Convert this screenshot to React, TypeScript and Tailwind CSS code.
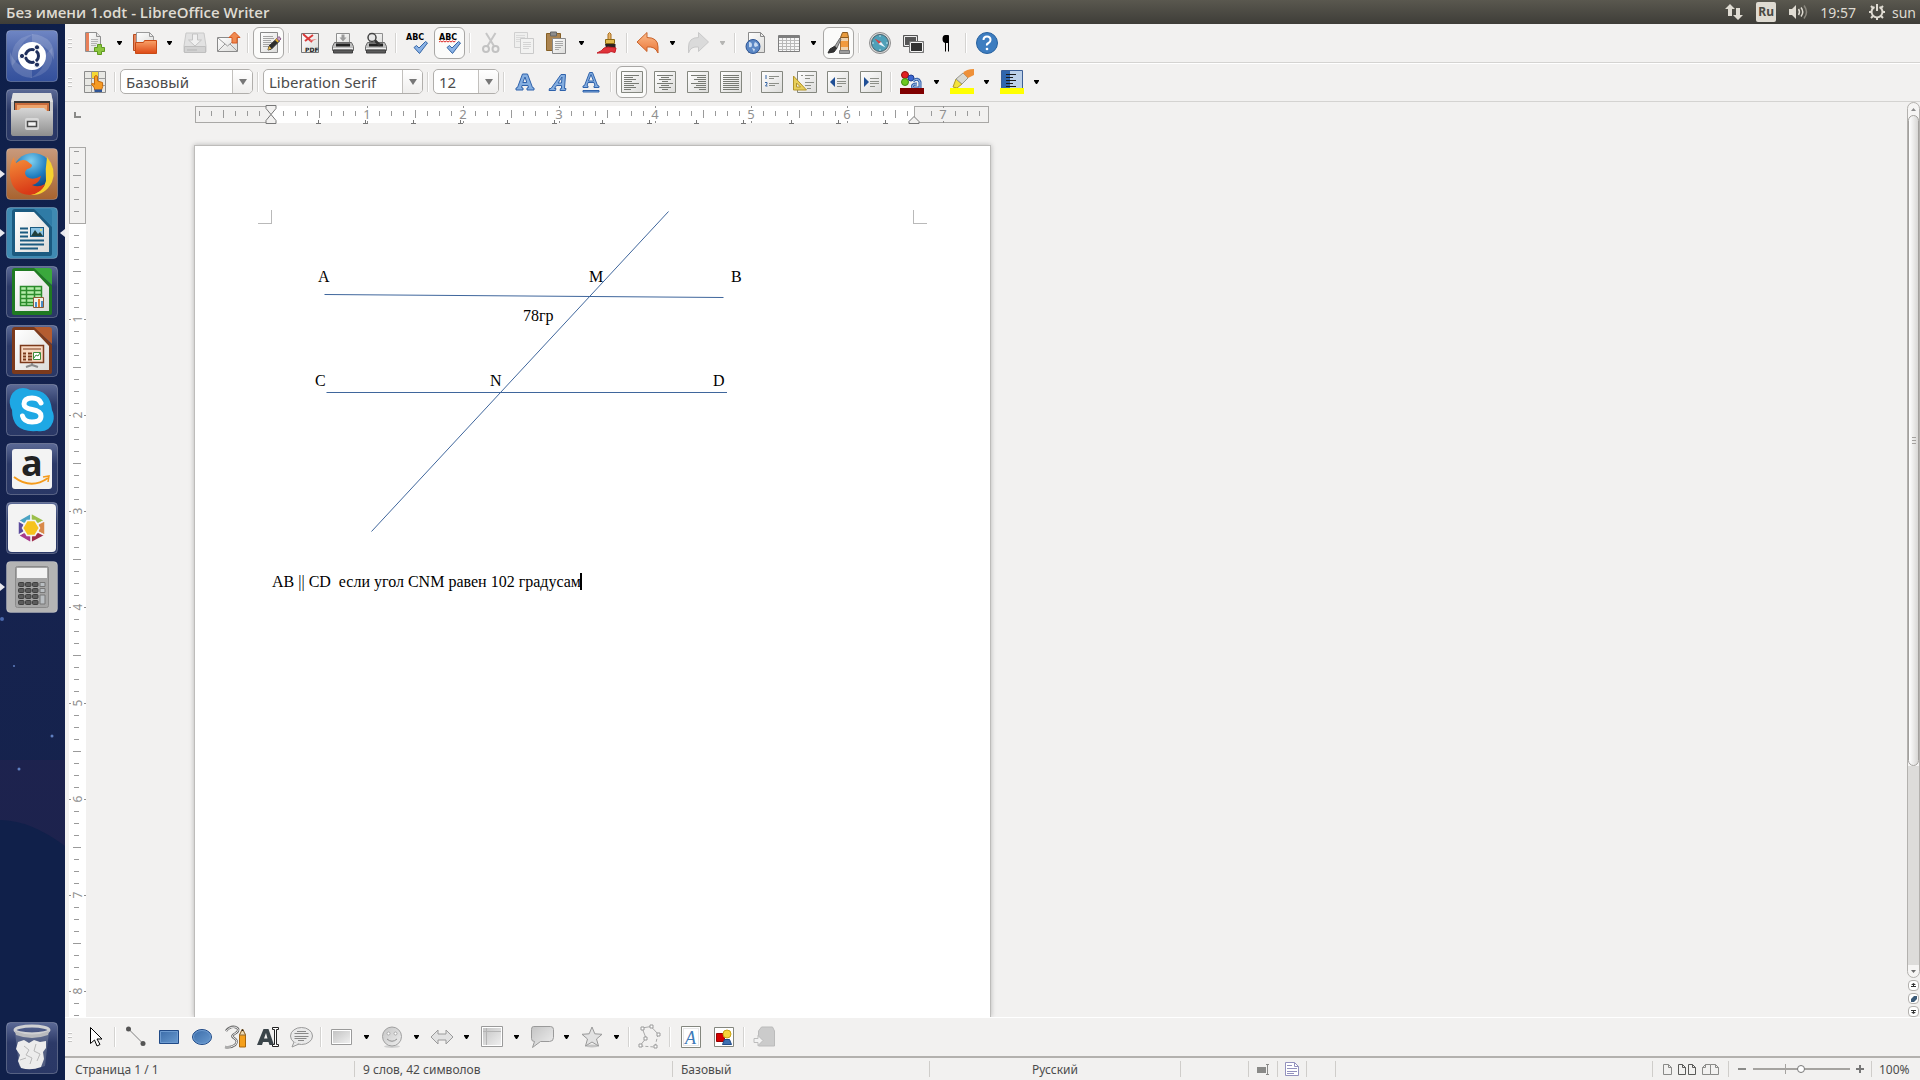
import { ReactNode } from "react";

type Tool = {
  label: string;
  icon: ReactNode;
  menu?: boolean;
  pressed?: boolean;
  disabled?: boolean;
};

type Item = Tool | "sep";

function Ic({ children }: { children: ReactNode }) {
  return (
    <svg className="overflow-visible" width="24" height="24" viewBox="0 0 24 24" fill="none" aria-hidden="true">
      {children}
    </svg>
  );
}

function Defs() {
  return (
    <svg width="0" height="0" className="absolute" aria-hidden="true">
      <defs>
        <linearGradient id="paper" x1="0" y1="0" x2="1" y2="1">
          <stop offset="0" stopColor="#ffffff" />
          <stop offset="1" stopColor="#dcdcda" />
        </linearGradient>
        <linearGradient id="orange" x1="0" y1="0" x2="0" y2="1">
          <stop offset="0" stopColor="#f9a36a" />
          <stop offset="1" stopColor="#dd4814" />
        </linearGradient>
        <linearGradient id="peach" x1="0" y1="0" x2="0" y2="1">
          <stop offset="0" stopColor="#fbbd8c" />
          <stop offset="1" stopColor="#ea7436" />
        </linearGradient>
        <linearGradient id="blue" x1="0" y1="0" x2="1" y2="1">
          <stop offset="0" stopColor="#3a6ba8" />
          <stop offset="1" stopColor="#6a9bd0" />
        </linearGradient>
        <linearGradient id="grey" x1="0" y1="0" x2="1" y2="1">
          <stop offset="0" stopColor="#c4c4c4" />
          <stop offset="1" stopColor="#efefef" />
        </linearGradient>
        <linearGradient id="tile" x1="0" y1="0" x2="0" y2="1">
          <stop offset="0" stopColor="#5c6a96" />
          <stop offset="0.4" stopColor="#2c3a68" />
          <stop offset="1" stopColor="#2a3866" />
        </linearGradient>
        <linearGradient id="dash" x1="0" y1="0" x2="0" y2="1">
          <stop offset="0" stopColor="#6f86c4" />
          <stop offset="0.5" stopColor="#4a63a8" />
          <stop offset="1" stopColor="#33509c" />
        </linearGradient>
        <linearGradient id="metal" x1="0" y1="0" x2="0" y2="1">
          <stop offset="0" stopColor="#d6d6d6" />
          <stop offset="1" stopColor="#8e8e8e" />
        </linearGradient>
        <linearGradient id="brown" x1="0" y1="0" x2="0" y2="1">
          <stop offset="0" stopColor="#c99a7c" />
          <stop offset="1" stopColor="#a8632f" />
        </linearGradient>
        <radialGradient id="globe" cx="0.45" cy="0.2" r="0.8">
          <stop offset="0" stopColor="#7fd0f0" />
          <stop offset="0.5" stopColor="#1f7dc0" />
          <stop offset="1" stopColor="#0c2f6c" />
        </radialGradient>
        <linearGradient id="fox" x1="0" y1="0" x2="0.3" y2="1">
          <stop offset="0" stopColor="#f5913a" />
          <stop offset="1" stopColor="#d93a17" />
        </linearGradient>
      </defs>
    </svg>
  );
}

/* ---------- toolbar icons ---------- */

const newDoc = (
  <Ic>
    <path d="M2.500 1.500h11l4 4v15h-15z" fill="url(#paper)" stroke="#8f8f8f" />
    <path d="M3 2h3v18H3z" fill="#e8805a" />
    <path d="M13.500 1.500v4h4" fill="#e4e4e4" stroke="#8f8f8f" />
    <path d="M8 8.500h7M8 10.500h7M8 12.500h6M8 14.500h5" stroke="#b4b4b4" />
    <path d="M14.500 13.500h4v3h3v4h-3v3h-4v-3h-3v-4h3z" fill="#8cc63f" stroke="#5f9a20" />
  </Ic>
);

const openDoc = (
  <Ic>
    <path d="M.5 3.500h9v16h-9z" fill="#e7855c" stroke="#b54c20" />
    <path d="M3.500 1.500h13l4 4v9h-17z" fill="url(#paper)" stroke="#9a9a9a" />
    <path d="M16.500 1.500v4h4" stroke="#9a9a9a" />
    <path d="M2.500 11.500l8 0l1-2h12v13h-21z" fill="url(#orange)" stroke="#c94a14" />
  </Ic>
);

const saveDoc = (
  <Ic>
    <path d="M3 2h18l2 13v6H1v-6z" fill="#e2e2e2" stroke="#c9c9c9" />
    <path d="M1.500 15.500h21v6h-21z" fill="#d2d2d2" stroke="#bfbfbf" />
    <path d="M9.500 3v6h-4l6.500 6 6.500-6h-4V3z" fill="#f0f0f0" stroke="#c4c4c4" />
    <path d="M4 19h10" stroke="#b5b5b5" />
  </Ic>
);

const mail = (
  <Ic>
    <path d="M1.500 6.500h20v14h-20z" fill="url(#paper)" stroke="#8a8a8a" />
    <path d="M2 7l9.500 8L21 7M2 20l7-7M21 20l-7-7" stroke="#9c9c9c" />
    <path d="M16 12V6.500h-3L18.500 1 24 6.500h-3V12z" fill="#f08a50" stroke="#d85820" />
  </Ic>
);

const edit = (
  <Ic>
    <path d="M3.500 1.500h17v20h-17z" fill="url(#paper)" stroke="#8a8a8a" />
    <path d="M6 5.500h10M6 7.500h11M6 9.500h8M6 11.500h9M6 13.500h7M6 15.500h5" stroke="#a5a5a5" />
    <path d="M11 19l1-4 8-7.500 2.500 2.500-8 8z" fill="#2d2d2d" stroke="#2d2d2d" />
    <path d="M11 19l1-4 2.500 2.500z" fill="#e8b84a" />
    <path d="M18 9l2-2 2.500 2.500-2 2z" fill="#e0b030" />
    <path d="M20 7.500l2-2 2 2.500-2 2z" fill="#c9a0c8" stroke="#8a5f88" />
  </Ic>
);

const pdf = (
  <Ic>
    <path d="M3.500 2.500h17v19h-17z" fill="url(#paper)" stroke="#777" />
    <path d="M5 3l9 8M7 10l8-6" stroke="#d93a3a" strokeWidth="2" />
    <path d="M12 9l7-1-7 3z" fill="#e46a6a" />
    <text x="7" y="20.500" fontSize="6" fontWeight="700" fontFamily="DejaVu Sans" fill="#222">PDF</text>
  </Ic>
);

const printer = (
  <>
    <path d="M5.500 2.500h13v10h-13z" fill="url(#paper)" stroke="#8f8f8f" />
    <path d="M3.500 11.500h17l2 4v4h-21v-4z" fill="#bdbdbd" stroke="#6b6b6b" />
    <path d="M5 12.500h14v3H5z" fill="#222" />
    <path d="M2 17.500h20" stroke="#eee" />
    <path d="M2.500 19h19v3h-19z" fill="#5b5b5b" stroke="#3f3f3f" />
  </>
);

const print = (
  <Ic>
    {printer}
    <path d="M10.500 3.500h3v3h2l-3.500 4-3.500-4h2z" fill="#9a9a9a" />
  </Ic>
);

const preview = (
  <Ic>
    {printer}
    <circle cx="8" cy="6.500" r="4" fill="#e8e8e8" stroke="#444" strokeWidth="1.500" />
    <path d="M11 9.500l5 5" stroke="#333" strokeWidth="2.500" />
  </Ic>
);

const Abc = ({ wavy }: { wavy?: boolean }) => (
  <Ic>
    <text x="1" y="9" fontSize="8" fontWeight="700" fontFamily="DejaVu Sans" fill="#000">ABC</text>
    {wavy && <path d="M1 11l1.500-1 1.500 1 1.500-1 1.500 1 1.500-1 1.500 1 1.500-1 1.500 1 1.500-1 1.500 1 1.500-1" stroke="#d22" />}
    <path d="M9 16.500l2.500-2 2.500 2.500 6.500-6.500 2 1.500-8 10.500z" fill="#8ab2e6" stroke="#3566a5" />
  </Ic>
);

const cut = (
  <Ic>
    <path d="M7 2l8 13M16.500 2l-8 13" stroke="#c6c6c6" strokeWidth="2" />
    <circle cx="7" cy="18" r="3" stroke="#c2c2c2" strokeWidth="2" />
    <circle cx="16.500" cy="18" r="3" stroke="#c2c2c2" strokeWidth="2" />
  </Ic>
);

const copy = (
  <Ic>
    <path d="M2.500 1.500h13v15h-13z" fill="#efefee" stroke="#d0d0d0" />
    <path d="M4 4.500h9M4 6.500h9M4 8.500h4M4 10.500h4" stroke="#dadada" />
    <path d="M8.500 7.500h13v15h-13z" fill="#f2f2f1" stroke="#cacaca" />
    <path d="M11 11.500h8M11 13.500h8M11 15.500h8M11 17.500h6" stroke="#d4d4d4" />
  </Ic>
);

const paste = (
  <Ic>
    <path d="M1.500 2.500h14v17h-14z" fill="#ab8450" stroke="#866026" />
    <path d="M5.500 1h6v4h-6z" fill="#8c8c8c" stroke="#666" />
    <path d="M7.500 7.500h13v15h-13z" fill="url(#paper)" stroke="#8a8a8a" />
    <path d="M10 10.500h8M10 12.500h8M10 14.500h8M10 16.500h6M10 18.500h4" stroke="#a8a8a8" />
  </Ic>
);

const brush = (
  <Ic>
    <path d="M13 9V3q1.500-3 3 0v6z" fill="#e7b368" stroke="#a96f1e" />
    <path d="M10.500 8.500h9v4h-9z" fill="#e0b84c" stroke="#8c6a16" />
    <path d="M10 13h10.500v6l-9 0z" fill="#2a2222" />
    <path d="M2 22q5-2 7-5l4-1 8 1-1 4.500-4-1-3 1.500z" fill="#e0333a" stroke="#c42028" />
  </Ic>
);

const undo = (
  <Ic>
    <path d="M1 11L11 1.500v5q11 0 11 9.500v6q-3-7-11-6v4.500z" fill="url(#peach)" stroke="#c9642c" />
  </Ic>
);

const redo = (
  <Ic>
    <path d="M22.500 11L12.500 1.500v5q-10 0-10 9.500v6q2-7 10-6v4.500z" fill="#dadada" stroke="#c9c9c9" />
  </Ic>
);

const link = (
  <Ic>
    <path d="M4.500 1.500h12l4 4v16h-16z" fill="url(#paper)" stroke="#8a8a8a" />
    <path d="M16.500 1.500v4h4" stroke="#8a8a8a" />
    <circle cx="9" cy="15.500" r="7" fill="#5b87c4" stroke="#2d5595" />
    <path d="M5 11q3 0 3 3t-3 2zM11 11q3 1 3 4l-3 1q-2-2 0-5zM8 17l3 1-1 3z" fill="#c7daf1" />
  </Ic>
);

const table = (
  <Ic>
    <path d="M1.500 4.500h21v16h-21z" fill="#f7f7f7" stroke="#7d7d7d" />
    <path d="M2 4h20v3H2z" fill="#7d7d7d" />
    <path d="M2 9.500h20M2 12.500h20M2 15.500h20M2 18.500h20M5.500 7v13M9.500 7v13M13.500 7v13M17.500 7v13" stroke="#b9b9b9" />
  </Ic>
);

const draw = (
  <Ic>
    <path d="M13.500 6.500h8v14h-8z" fill="#eed2ae" stroke="#a87030" />
    <path d="M15.500 1.500h5l1 5h-8z" fill="#e89a3c" stroke="#8a5a20" />
    <path d="M14 10h7v6h-7z" fill="#f29a3c" />
    <path d="M12.500 19.500h10v3h-10z" fill="#9c9c9c" stroke="#7a7a7a" />
    <path d="M1 22l2-4 5-3 2 2-3 4z" fill="#333" stroke="#2c2c2c" />
    <path d="M8 15l5-8 1 1-4 9z" fill="#a9a9a9" stroke="#6a6a6a" />
  </Ic>
);

const navigator = (
  <Ic>
    <circle cx="12" cy="12" r="10.500" fill="#d7d7d7" stroke="#8f8f8f" />
    <circle cx="12" cy="12" r="8.500" fill="#4fa0b8" stroke="#48606a" />
    <path d="M6.500 7.500l7 3.500-2 2.500z" fill="#d94040" />
    <path d="M17.500 16.500l-7-3.500 2.500-2z" fill="#e9f4fa" />
    <path d="M12 4v2M12 18v2M4 12h2M18 12h2" stroke="#bfe3ef" />
  </Ic>
);

const gallery = (
  <Ic>
    <path d="M2.500 4.500h14v11h-14z" fill="#555" stroke="#555" />
    <path d="M3.500 5.500h12v9h-12z" stroke="#eee" />
    <path d="M8.500 10.500h14v11h-14z" fill="#333" stroke="#777" />
    <path d="M9.500 11.500h12v9h-12z" stroke="#f4f4f4" />
  </Ic>
);

const pilcrow = (
  <Ic>
    <path d="M11.500 4.500v16M14.500 4.500v16" stroke="#000" />
    <path d="M15.500 4h-4q-3 0-3 4t3.500 4h2.500V4z" fill="#000" />
  </Ic>
);

const help = (
  <Ic>
    <circle cx="12" cy="12" r="10.500" fill="#3d7dc0" stroke="#27619f" />
    <path d="M8.500 9q0-3.500 3.500-3.500T15.500 9q0 2-2 3t-1.500 2.500" stroke="#fff" strokeWidth="2" />
    <circle cx="12" cy="18" r="1.300" fill="#fff" />
  </Ic>
);

const stylesIcon = (
  <Ic>
    <path d="M1.500 1.500h21v21h-21z" fill="#e8e8e4" stroke="#8a8a8a" />
    <path d="M1.500 8.500h21M1.500 15.500h21M8.500 1.500v21M15.500 1.500v21" stroke="#9a9a9a" />
    <path d="M9 2h6v6H9z" fill="#f5d835" />
    <path d="M11.500 20v-2l-3-4q1-1.500 3 .5V6.500q1.500-2 3 0V11l5 1.500q1 4-1 7.500z" fill="#f59a23" stroke="#c4680e" />
    <path d="M11.500 19.500h7.500v2.500h-7.500z" fill="#2f5597" />
  </Ic>
);

const bold = (
  <Ic>
    <path fillRule="evenodd" d="M3 20v-2l1.500-.5L9.500 4h5l5 13.500 1.500.5v2h-7v-2l1.500-.5-.5-2H9l-.5 2 1.500.5v2zM9.800 12.500h4L12 7z" fill="#84aee0" stroke="#2f62ab" />
  </Ic>
);

const italic = (
  <Ic>
    <path fillRule="evenodd" d="M3 20.500l.5-2h1.500L15 4.500h4.500l-1 14h1.500l-.5 2h-5.500l.5-2h1v-3h-5l-2 3h1.500l-.5 2zM12 13h3.500l.5-6z" fill="#84aee0" stroke="#2f62ab" />
  </Ic>
);

const underline = (
  <Ic>
    <path fillRule="evenodd" d="M4 17.500v-1.500l1.500-.5L10.500 2.500h3l5 13 1.500.5v1.500h-5V16l1-.5-1-3H9l-1 3 1 .5v1.500zM9.500 11h5L12 4.500z" fill="#84aee0" stroke="#2f62ab" />
    <path d="M4 20.500h16v1.500H4z" fill="#84aee0" stroke="#2f62ab" />
  </Ic>
);

const Align = ({ lines }: { lines: string }) => (
  <Ic>
    <path d="M1.500 1.500h21v21h-21z" fill="url(#paper)" stroke="#84877f" />
    <path d={lines} stroke="#777a73" />
  </Ic>
);

const bullets = (
  <Ic>
    <path d="M1.500 1.500h21v21h-21z" fill="url(#paper)" stroke="#84877f" />
    <path d="M6 5v4M5 12.500h2v1.500l-1.500 2h2" stroke="#3465a4" />
    <path d="M9 6.500h10M9 8.500h5M9 13.500h10M9 15.500h6" stroke="#8c8f88" />
  </Ic>
);

const numbering = (
  <Ic>
    <path d="M4.500 1.500h19v21h-19z" fill="url(#paper)" stroke="#84877f" />
    <path d="M8 5.500h2M12 5.500h9M12 8.500h5M12 12.500h9M12 15.500h6M14 18.500h4" stroke="#8c8f88" />
    <path d="M.5 6v14h13z" fill="#e8cf5a" stroke="#b3942a" />
    <path d="M3.500 13v4h4z" fill="#f1f1ea" stroke="#b3942a" />
  </Ic>
);

const indentLess = (
  <Ic>
    <path d="M1.500 1.500h21v21h-21z" fill="url(#paper)" stroke="#84877f" />
    <path d="M9 7v10l-5-5z" fill="#1f4f96" />
    <path d="M11 8.500h9M11 11.500h9M11 13.500h9M11 16.500h5" stroke="#8c8f88" />
  </Ic>
);

const indentMore = (
  <Ic>
    <path d="M1.500 1.500h21v21h-21z" fill="url(#paper)" stroke="#84877f" />
    <path d="M5 7v10l5-5z" fill="#1f4f96" />
    <path d="M11 8.500h9M11 11.500h9M11 13.500h9M11 16.500h5" stroke="#8c8f88" />
  </Ic>
);

const fontColor = (
  <Ic>
    <circle cx="5" cy="5" r="3.500" fill="#e02020" stroke="#8c1010" />
    <circle cx="5" cy="12" r="3.500" fill="#6cc920" stroke="#3c8c10" />
    <circle cx="11" cy="8" r="3" fill="#3c66d0" stroke="#1c3c90" />
    <path d="M13 11q5-4 7 1v6h-7q-2-4 4-4" stroke="#2f5ca8" strokeWidth="3" />
    <path d="M13 11q5-4 7 1v6h-7q-2-4 4-4" stroke="#a9c7ee" />
    <path d="M0 18h24v6H0z" fill="#800000" />
  </Ic>
);

const highlight = (
  <Ic>
    <path d="M3 17l3-8 6 5-5 4z" fill="#f4e23a" stroke="#b09a20" />
    <path d="M6 9l7-6 5 5-6 6z" fill="#d9d9d2" stroke="#98988e" />
    <path d="M13 3q3-4 11-4v6l-6 3z" fill="#ee9038" />
    <path d="M0 18h24v6H0z" fill="#ffff00" />
  </Ic>
);

const background = (
  <Ic>
    <path d="M1.500 0.500h21v18h-21z" fill="#bcd0e8" stroke="#3c5f96" />
    <path d="M2 1h8v17H2z" fill="#2f65ac" />
    <path d="M6 4.500h10M6 7.500h7M6 10.500h10M6 13.500h7M6 16.500h10" stroke="#1a1a1a" />
    <path d="M0 18h24v6H0z" fill="#ffff00" />
  </Ic>
);

const cursor = (
  <Ic>
    <path d="M7.500 2.500v16l4-3.500 2.500 6 3-1.500-3-5.500h5z" fill="#fff" stroke="#000" />
  </Ic>
);

const line = (
  <Ic>
    <path d="M5 4.500l14 14" stroke="#808080" />
    <circle cx="4.500" cy="4" r="2.500" fill="#555" />
    <circle cx="19" cy="18.500" r="2.500" fill="#555" />
  </Ic>
);

const rect = (
  <Ic>
    <path d="M2.500 5.500h19v13h-19z" fill="url(#blue)" stroke="#204a87" />
    <path d="M3.500 6.500h17v11h-17z" stroke="#6d9bd0" />
  </Ic>
);

const ellipse = (
  <Ic>
    <ellipse cx="12" cy="12" rx="9.500" ry="7.500" fill="url(#blue)" stroke="#204a87" />
    <ellipse cx="12" cy="12" rx="8.500" ry="6.500" stroke="#6d9bd0" />
  </Ic>
);

const curve = (
  <Ic>
    <path d="M3 6q4-5 9-4 6 2 1 6-6 3-2 5 5 3 1 7-4 3-10 2" stroke="#6a6a6a" strokeWidth="2.500" />
    <path d="M3 6q4-5 9-4 6 2 1 6-6 3-2 5 5 3 1 7-4 3-10 2" stroke="#eee" />
    <path d="M16.500 22V10l3-6 3 6v12z" fill="#f5a01c" stroke="#a8660c" />
    <path d="M16.500 10l3-6 3 6z" fill="#f1dcb4" stroke="#8a6a3a" />
    <path d="M18.500 6l1-2 1 2z" fill="#222" />
  </Ic>
);

const textTool = (
  <Ic>
    <path fillRule="evenodd" d="M1 20L7.500 4h5l5.500 16h-4.500l-1-3H7l-1 3zM8 13.500h3.500L10 8z" fill="#3b454a" />
    <path d="M16.500 2.500h6v2h-2v15h2v2h-6v-2h2v-15h-2z" fill="#fff" stroke="#222" />
  </Ic>
);

const callout = (
  <Ic>
    <ellipse cx="12.500" cy="11" rx="11" ry="8.500" fill="#e9e9e9" stroke="#9a9a9a" />
    <path d="M5 17l-2 5 7-3" fill="#e9e9e9" stroke="#9a9a9a" />
    <path d="M8 6.500h9M5.500 8.500h14M5.500 11.500h14M5.500 13.500h12M9 15.500h6" stroke="#888" />
  </Ic>
);

const shapes = (
  <Ic>
    <path d="M1.500 4.500h20v15h-20z" fill="#fff" stroke="#9a9a9a" />
    <path d="M3 6h17v12H3z" fill="url(#grey)" />
  </Ic>
);

const smiley = (
  <Ic>
    <ellipse cx="12" cy="21.500" rx="8" ry="1.500" fill="#d0d0d0" />
    <circle cx="12" cy="11.500" r="9.500" fill="url(#grey)" stroke="#a0a0a0" />
    <circle cx="8.500" cy="8.500" r="1.500" fill="#fff" stroke="#aaa" />
    <circle cx="15.500" cy="8.500" r="1.500" fill="#fff" stroke="#aaa" />
    <path d="M7 14q5 4.500 10 0" stroke="#8f8f8f" />
  </Ic>
);

const arrows = (
  <Ic>
    <path d="M1 12l7-7v4h8V5l7 7-7 7v-4H8v4z" fill="#e2e2e2" stroke="#9a9a9a" />
  </Ic>
);

const flowchart = (
  <Ic>
    <path d="M1.500 1.500h21v20h-21z" fill="#fff" stroke="#9a9a9a" />
    <path d="M3 3h18v17H3z" fill="url(#grey)" />
    <path d="M3 6.500h18M6.500 3v17" stroke="#b4b4b4" />
  </Ic>
);

const bubble = (
  <Ic>
    <path d="M3.500 1.500h17q3 0 3 3v8q0 4-4 4h-9l-8 6 2-6q-3 0-3-3v-9q0-3 2-3z" fill="url(#grey)" stroke="#9a9a9a" />
  </Ic>
);

const star = (
  <Ic>
    <ellipse cx="12" cy="21" rx="7" ry="1.500" fill="#c4c4c4" />
    <path d="M12 2l2.800 6.800 7.200.5-5.500 4.700 2 7L12 17l-6.500 4 2-7L2 9.300l7.200-.5z" fill="#e2e2e2" stroke="#999" />
  </Ic>
);

const points = (
  <Ic>
    <path d="M4 3l9-1.500L20 9M4 3l4 10-6 8" stroke="#aaa" />
    <path d="M20 9l-3 13L2 21" stroke="#aaa" strokeDasharray="3 2" />
    <path d="M3 2h3v3H3zM12 0h3v3h-3zM19 8h3v3h-3zM6 12h3v3H6zM1 19h3v3H1zM16 20h3v3h-3z" fill="#fff" stroke="#999" />
  </Ic>
);

const fontwork = (
  <Ic>
    <path d="M2.500 1.500h19v21h-19z" fill="#fff" stroke="#84877f" />
    <path d="M4.500 3.500h15v17h-15z" stroke="#cfcfcf" strokeDasharray="1 1" />
    <text x="6" y="19" fontSize="18" fontStyle="italic" fontFamily="Liberation Serif" fill="#3d7ab8">A</text>
  </Ic>
);

const picture = (
  <Ic>
    <path d="M2.500 2.500h19v19h-19z" fill="#fff" stroke="#84877f" />
    <path d="M4.500 8.500h8v8h-8z" fill="#d40000" stroke="#900" />
    <path d="M10.500 19.500l2-5h5l2 5z" fill="#3d6fb0" stroke="#204a87" />
    <circle cx="15" cy="9" r="4" fill="#f7d53c" stroke="#c9a414" />
  </Ic>
);

const extrusion = (
  <Ic>
    <path d="M5.500 6l3-4h11l2 4v15h-16z" fill="#cbcbcb" stroke="#bbb" />
    <path d="M1 13.500h4v-3l5 5-5 5v-3H1z" fill="#f2f2f2" stroke="#bcbcbc" />
  </Ic>
);

const standardBar: Item[] = [
  { label: "Создать", icon: newDoc, menu: true },
  { label: "Открыть", icon: openDoc, menu: true },
  { label: "Сохранить", icon: saveDoc },
  { label: "Отправить по почте", icon: mail },
  "sep",
  { label: "Режим правки", icon: edit, pressed: true },
  "sep",
  { label: "Экспорт в PDF", icon: pdf },
  { label: "Печать", icon: print },
  { label: "Предпросмотр", icon: preview },
  "sep",
  { label: "Проверка орфографии", icon: <Abc /> },
  { label: "Автопроверка", icon: <Abc wavy />, pressed: true },
  "sep",
  { label: "Вырезать", icon: cut },
  { label: "Копировать", icon: copy },
  { label: "Вставить", icon: paste, menu: true },
  { label: "Копировать формат", icon: brush },
  "sep",
  { label: "Отменить", icon: undo, menu: true },
  { label: "Вернуть", icon: redo, menu: true, disabled: true },
  "sep",
  { label: "Гиперссылка", icon: link },
  { label: "Таблица", icon: table, menu: true },
  { label: "Функции рисования", icon: draw, pressed: true },
  "sep",
  { label: "Навигатор", icon: navigator },
  { label: "Галерея", icon: gallery },
  { label: "Непечатаемые символы", icon: pilcrow },
  "sep",
  { label: "Справка", icon: help },
];

const formatBar: Item[] = [
  "sep",
  { label: "Полужирный", icon: bold },
  { label: "Курсив", icon: italic },
  { label: "Подчёркивание", icon: underline },
  "sep",
  { label: "По левому краю", pressed: true, icon: <Align lines="M4 5.500h15M4 7.500h9M4 9.500h12M4 11.500h8M4 13.500h15M4 15.500h10M4 17.500h12M4 19.500h7" /> },
  { label: "По центру", icon: <Align lines="M4 5.500h16M8 7.500h8M6 9.500h12M9 11.500h6M4 13.500h16M8 15.500h8M6 17.500h12M9 19.500h6" /> },
  { label: "По правому краю", icon: <Align lines="M5 5.500h15M11 7.500h9M8 9.500h12M12 11.500h8M5 13.500h15M10 15.500h10M8 17.500h12M13 19.500h7" /> },
  { label: "По ширине", icon: <Align lines="M4 5.500h16M4 7.500h16M4 9.500h16M4 11.500h16M4 13.500h16M4 15.500h16M4 17.500h16M4 19.500h16" /> },
  "sep",
  { label: "Маркированный список", icon: bullets },
  { label: "Нумерованный список", icon: numbering },
  { label: "Уменьшить отступ", icon: indentLess },
  { label: "Увеличить отступ", icon: indentMore },
  "sep",
  { label: "Цвет шрифта", icon: fontColor, menu: true },
  { label: "Выделение цветом", icon: highlight, menu: true },
  { label: "Цвет фона", icon: background, menu: true },
];

const drawingBar: Item[] = [
  { label: "Выделить", icon: cursor },
  "sep",
  { label: "Линия", icon: line },
  { label: "Прямоугольник", icon: rect },
  { label: "Эллипс", icon: ellipse },
  { label: "Полилиния", icon: curve },
  { label: "Текст", icon: textTool },
  { label: "Сноска", icon: callout },
  "sep",
  { label: "Основные фигуры", icon: shapes, menu: true },
  { label: "Символы", icon: smiley, menu: true },
  { label: "Стрелки", icon: arrows, menu: true },
  { label: "Блок-схемы", icon: flowchart, menu: true },
  { label: "Выноски", icon: bubble, menu: true },
  { label: "Звёзды", icon: star, menu: true },
  "sep",
  { label: "Узлы", icon: points },
  "sep",
  { label: "Галерея текстовых эффектов", icon: fontwork },
  { label: "Из файла", icon: picture },
  "sep",
  { label: "Экструзия", icon: extrusion },
];

function Items({ items }: { items: Item[] }) {
  return (
    <>
      {items.map((item, i) =>
        item === "sep" ? (
          <span key={i} className="mx-[3px] h-5 w-0.5 flex-none border-l border-[#d4d3d1] bg-white" />
        ) : (
          <span key={i} className="flex flex-none items-center">
            <button
              type="button"
              aria-label={item.label}
              aria-pressed={item.pressed}
              className={
                item.pressed
                  ? "mx-px flex h-8 w-[31px] items-center justify-center rounded-md border border-[#a8a7a5] bg-[#fbfbfa]"
                  : "flex h-8 w-[33px] items-center justify-center"
              }
            >
              {item.icon}
            </button>
            {item.menu && (
              <button type="button" aria-label={`${item.label}: меню`} className="flex h-8 w-[17px] items-center justify-center">
                <svg width="5" height="4" viewBox="0 0 5 4" aria-hidden="true">
                  <path d="M0 0h5v1L3 4H2L0 1z" fill={item.disabled ? "#b5b5b3" : "#000"} />
                </svg>
              </button>
            )}
          </span>
        )
      )}
    </>
  );
}

function Grip() {
  return (
    <span className="mr-0.5 ml-[3px] flex w-2 flex-none flex-col items-start gap-0.5 pr-1">
      {[0, 1, 2].map((n) => (
        <span key={n} className="h-0.5 w-1 border-b border-[#c6c5c3] bg-white" />
      ))}
    </span>
  );
}

function Combo({ label, value, className }: { label: string; value: string; className: string }) {
  return (
    <label className={`relative mx-px flex h-[25px] flex-none overflow-hidden rounded-[5px] border border-[#b0aeab] bg-white ${className}`}>
      <select
        aria-label={label}
        defaultValue={value}
        className="w-full appearance-none bg-transparent pl-[5px] text-[15px] leading-[22px] text-[#4c4c4c] outline-none"
      >
        <option>{value}</option>
      </select>
      <span className="pointer-events-none absolute inset-y-0 right-0 flex w-5 items-center justify-center border-l border-[#c2c0bd] bg-linear-to-b from-white to-[#efeeed]">
        <svg width="8" height="6" viewBox="0 0 8 6" aria-hidden="true">
          <path d="M0 0h8L4 6z" fill="#777" />
        </svg>
      </span>
    </label>
  );
}

/* ---------- launcher ---------- */

function Tile({ fill, children }: { fill: string; children: ReactNode }) {
  return (
    <svg className="overflow-visible" width="52" height="52" viewBox="0 0 52 52" fill="none" aria-hidden="true">
      <rect x="0.500" y="0.500" width="51" height="51" rx="4" fill={fill} stroke="#ffffff" strokeOpacity="0.250" />
      {children}
    </svg>
  );
}

function OfficeSheet({ color, corner, children }: { color: string; corner: string; children: ReactNode }) {
  return (
    <>
      <path d="M9 2h20l17 18v27q0 2-2 2H8q-2 0-2-2V5q0-3 3-3z" fill={color} />
      <path d="M28 2h15q3 0 3 3v14z" fill={corner} />
      <path d="M9 5h19l15 16v24H9z" fill="url(#paper)" />
      {children}
    </>
  );
}

const launcher: { name: string; icon: ReactNode; running?: boolean; focused?: boolean }[] = [
  {
    name: "Главное меню",
    icon: (
      <Tile fill="url(#dash)">
        <path d="M26 4q24 2 22 26Q42 14 26 13zM26 48Q2 46 4 22q6 16 22 17z" fill="#fff" opacity="0.160" />
        <path d="M6 36Q2 8 28 4q-16 8-14 22zM46 18q4 26-22 30 16-8 14-22z" fill="#fff" opacity="0.130" />
        <circle cx="26" cy="26" r="14" fill="#fff" />
        <circle cx="26" cy="26" r="6.500" stroke="#1f2f5c" strokeWidth="3" />
        <path d="M26 26L14 26M26 26l6-10.500M26 26l6 10.500" stroke="#fff" strokeWidth="1.500" />
        <circle cx="16" cy="26" r="2.600" fill="#1f2f5c" stroke="#fff" />
        <circle cx="31" cy="17.300" r="2.600" fill="#1f2f5c" stroke="#fff" />
        <circle cx="31" cy="34.700" r="2.600" fill="#1f2f5c" stroke="#fff" />
      </Tile>
    ),
  },
  {
    name: "Файлы",
    icon: (
      <Tile fill="url(#tile)">
        <path d="M7 4h38l2 9v31q0 1-1 1H6q-1 0-1-1V13z" fill="#c9c9c9" />
        <path d="M7 4h38l2 9H5z" fill="#e0e0e0" />
        <path d="M8 12h36v11H8z" fill="#3d3a38" />
        <path d="M9 14h34v8H9z" fill="#c96c3c" />
        <path d="M11 16h30v6H11z" fill="#eda46c" />
        <path d="M5 21h8l2-2h23l3 3h6v22q0 3-2 3H7q-2 0-2-3z" fill="url(#metal)" />
        <rect x="19" y="29" width="14" height="12" rx="2" fill="#d8d8d8" />
        <path d="M21.500 32.500h9v5h-9z" fill="#f4f4f4" stroke="#4b4b4b" strokeWidth="1.500" />
      </Tile>
    ),
  },
  {
    name: "Firefox",
    running: true,
    icon: (
      <Tile fill="url(#brown)">
        <circle cx="27" cy="25" r="20" fill="url(#globe)" />
        <path d="M41 9q10 12 5 25-7 14-22 13 14-4 16-14-1-12 1-24z" fill="#f6d12f" />
        <path d="M8 9q0 4 2 6 6-5 11-2l5 4q0 3-5 4-4 4 0 8 6 4 14-1-2 8-9 9 6 3 13-1-3 9-15 11Q6 46 4 28 3 16 8 9z" fill="url(#fox)" />
      </Tile>
    ),
  },
  {
    name: "LibreOffice Writer",
    running: true,
    focused: true,
    icon: (
      <Tile fill="#3f8ab2">
        <OfficeSheet color="#1b5a80" corner="#2f7ba6">
          <path d="M14 21.500h8M14 25.500h8M14 29.500h8M14 33.500h24M14 37.500h24M14 41.500h18" stroke="#1b5a80" strokeWidth="2" />
          <path d="M24 20h14v10H24z" fill="#1b5a80" />
          <path d="M25 21h12v8H25z" fill="#8cc4e4" />
          <path d="M25 29l4-6 3 4 2-2 3 4z" fill="#22403c" />
          <circle cx="35" cy="23" r="1" fill="#f2e36c" />
        </OfficeSheet>
      </Tile>
    ),
  },
  {
    name: "LibreOffice Calc",
    icon: (
      <Tile fill="url(#tile)">
        <OfficeSheet color="#1f7a22" corner="#3aa83c">
          <path d="M14 20h22v20H14z" fill="#b4ecaa" />
          <path d="M14.500 20.500h21v19h-21zM14 24.500h22M14 28.500h22M14 32.500h22M14 36.500h22M20.500 20v20M28.500 20v20" stroke="#2c8c2c" strokeWidth="1.500" />
          <path d="M27.500 31.500h10v10h-10z" fill="#f2efe9" stroke="#8a5a34" />
          <path d="M29 36h2v5h-2z" fill="#4a8cc8" />
          <path d="M32 33h2v8h-2z" fill="#e07a2a" />
          <path d="M35 35h2v6h-2z" fill="#4a8cc8" />
        </OfficeSheet>
      </Tile>
    ),
  },
  {
    name: "LibreOffice Impress",
    icon: (
      <Tile fill="url(#tile)">
        <OfficeSheet color="#7c3a1c" corner="#b45c30">
          <path d="M14.500 20.500h23v17h-23z" fill="#f7d8c2" stroke="#7c3a1c" strokeWidth="1.500" />
          <path d="M17 24h18" stroke="#7c3a1c" />
          <path d="M17 28.500h3M17 31.500h3M17 34.500h3M22 28.500h4M22 31.500h4M22 34.500h4" stroke="#7c3a1c" strokeWidth="2" />
          <path d="M27.500 27.500h7v7h-7z" fill="#fff" stroke="#3c8c3c" />
          <path d="M28 33l2-3 2 1 2-3" stroke="#3c8c3c" />
          <path d="M26 38v2l-6 2M26 40l6 2" stroke="#8a8a8a" strokeWidth="2" />
        </OfficeSheet>
      </Tile>
    ),
  },
  {
    name: "Skype",
    icon: (
      <Tile fill="url(#tile)">
        <path d="M17 4q4 0 7 2 20-1 22 20 3 6 1 12-4 11-16 9Q6 49 6 26 2 19 5 12q4-8 12-8z" fill="#1ea8e4" />
        <path d="M35 19q-2-5-9-5-8 0-8 6 0 4 8 5.500 9 1.500 9 6.500 0 6-9 6-8 0-9.500-6" stroke="#fff" strokeWidth="5" strokeLinecap="round" />
      </Tile>
    ),
  },
  {
    name: "Amazon",
    icon: (
      <Tile fill="url(#tile)">
        <rect x="6" y="6" width="40" height="40" rx="3" fill="#f3f3f3" />
        <text x="15" y="33" fontSize="36" fontWeight="700" fontFamily="Open Sans" fill="#222">a</text>
        <path d="M8 34q17 13 34 1" stroke="#f49b1c" strokeWidth="2" />
        <path d="M37 34l6-1-1 6" stroke="#f49b1c" strokeWidth="1.500" />
      </Tile>
    ),
  },
  {
    name: "Ubuntu Software",
    icon: (
      <Tile fill="url(#tile)">
        <rect x="2" y="2" width="48" height="48" rx="4" fill="#f3f3f3" />
        <g stroke="#f3f3f3" strokeWidth="1.500">
          <path d="M25 11v7l-7 4-6-3.500z" fill="#4ba3c3" />
          <path d="M25 11v7l7 4 7-3.500z" fill="#9cbf4a" />
          <path d="M39 18.500L32 22v8l7 3.500z" fill="#d98a4a" />
          <path d="M25 41v-7l7-4 7 3.500z" fill="#a02c4a" />
          <path d="M25 41v-7l-7-4-6 3.500z" fill="#a83a8c" />
          <path d="M12 18.500l6 3.500v8l-6 3.500z" fill="#5a4a9c" />
          <path d="M21 18.500h8l4.500 7.500-4.500 7.500h-8L16.500 26z" fill="#f6c31c" />
        </g>
      </Tile>
    ),
  },
  {
    name: "Калькулятор",
    running: true,
    icon: (
      <Tile fill="#b4b4b4">
        <rect x="9.500" y="5.500" width="33" height="41" rx="2" fill="#a4a4a4" stroke="#8a8a8a" />
        <rect x="11" y="7" width="30" height="10" fill="#f2f2f2" />
        {[0, 1, 2, 3].map((r) =>
          [0, 1, 2].map((c) => (
            <rect key={`${r}${c}`} x={12.5 + c * 7} y={21.5 + r * 6} width="5.500" height="4" rx="1" fill="#5b5b5b" stroke="#3f3f3f" />
          ))
        )}
        <path d="M34 21.500h5v4h-5zM34 27.500h5v4h-5zM34 34h5v9h-5z" fill="#b9bec2" stroke="#777" />
      </Tile>
    ),
  },
];

const trash = (
  <Tile fill="url(#tile)">
    <path d="M9 10h34l-4 34q-13 5-26 0z" fill="#9aa3b4" fillOpacity="0.350" />
    <path d="M12 20l6-2 5 3 5-3 6 2 6-1 0 7-3 4 1 7-3 8q-10 4-20 1l-3-7 2-6-4-6z" fill="#ececec" />
    <path d="M18 24l5 4-3 5 6 3-2 6M30 22l-2 7 6 3-3 7M14 38l6-2" stroke="#b9b9b9" />
    <ellipse cx="26" cy="8" rx="17" ry="4" stroke="#cfd0d2" strokeWidth="3" />
    <path d="M9 9q17 7 34 0l-1 4q-16 6-32 0z" fill="#b9bbbe" />
  </Tile>
);

function Launcher() {
  return (
    <nav aria-label="Панель запуска" className="relative flex w-[65px] flex-none flex-col bg-linear-to-b from-[#0e1f4a] via-[#16234f] to-[#14224a] pt-1.5">
      <svg className="absolute inset-x-0 bottom-0" width="65" height="500" viewBox="0 0 65 500" fill="none" aria-hidden="true">
        <path d="M0 180h65v90H0z" fill="#2a2350" opacity="0.400" />
        <path d="M0 240q30 0 65 26v234H0z" fill="#10204a" />
        <circle cx="14" cy="86" r="1" fill="#5f7fc0" />
        <circle cx="52" cy="156" r="1.500" fill="#5f7fc0" />
        <circle cx="19" cy="189" r="1.500" fill="#5f7fc0" />
        <circle cx="2" cy="39" r="2" fill="#4a68ac" />
      </svg>
      <ul className="relative flex flex-col gap-[7px]">
        {launcher.map((app) => (
          <li key={app.name} className="flex items-center">
            <span className="w-1.5 flex-none">
              {app.running && (
                <svg width="5" height="8" viewBox="0 0 5 8" aria-hidden="true">
                  <path d="M0 0l5 4-5 4z" fill="#e8e8ee" />
                </svg>
              )}
            </span>
            <button type="button" aria-label={app.name}>{app.icon}</button>
            {app.focused && (
              <svg className="ml-0.5" width="5" height="8" viewBox="0 0 5 8" aria-hidden="true">
                <path d="M5 0L0 4l5 4z" fill="#e8e8ee" />
              </svg>
            )}
          </li>
        ))}
      </ul>
      <button type="button" aria-label="Корзина" className="relative mt-auto mb-1.5 ml-1.5 self-start">{trash}</button>
    </nav>
  );
}

/* ---------- rulers ---------- */

const INCH = 96;
const STEP = INCH / 8;

function HorizontalRuler() {
  const zero = 76;
  const end = zero + 643;
  const ticks = Array.from({ length: 66 }, (_, i) => i - 6).filter((n) => n !== 0 && n !== 54);
  const tabs = Array.from({ length: 13 }, (_, i) => Math.round(zero + (i + 1) * 47.24));
  return (
    <svg width="796" height="30" viewBox="0 0 796 30" fill="none" shapeRendering="crispEdges" aria-hidden="true">
      <path d={`M${zero} 4H${end}v17H${zero}z`} fill="#fff" />
      <path d={`M0.500 4.500H${zero}M0.500 4v17M0.500 20.500H${zero}M${end} 4.500H793.500v16H${end}z`} stroke="#a9a8a6" />
      {ticks.map((n) => {
        const x = zero + n * STEP;
        if (x > 790) return null;
        if (n % 8 === 0) {
          return (
            <g key={n}>
              <path d={`M${x + 0.5} 4v2M${x + 0.5} 19v2`} stroke="#8f8f8f" />
              <text x={x} y="17" textAnchor="middle" fontSize="13" fontFamily="Noto Sans" fill="#8f8f8f">{n / 8}</text>
            </g>
          );
        }
        return <path key={n} d={n % 4 === 0 ? `M${x + 0.5} 8v8` : `M${x + 0.5} 9v5`} stroke="#9a9a9a" />;
      })}
      {tabs.map((x) => (
        <path key={x} d={`M${x + 0.5} 18v3M${x - 2} 21.500h5`} stroke="#777" />
      ))}
      <g shapeRendering="auto">
        <path d={`M${zero - 5} 3.500h10v3l-5 6-5-6zM${zero - 5} 21.500h10v-3l-5-6-5 6z`} fill="#f2f1f0" stroke="#777" />
        <path d={`M${end - 5} 21.500h10v-2l-5-5-5 5z`} fill="#f2f1f0" stroke="#777" />
      </g>
    </svg>
  );
}

function VerticalRuler() {
  const zero = 78;
  const ticks = Array.from({ length: 73 }, (_, i) => i - 6).filter((n) => n !== 0);
  return (
    <svg className="h-full w-[21px] flex-none" fill="none" shapeRendering="crispEdges" aria-hidden="true">
      <rect x="4" y={zero} width="17" height="100%" fill="#fff" />
      <path d={`M4.500 2.500h16v${zero - 2}h-16z`} stroke="#a9a8a6" />
      {ticks.map((n) => {
        const y = zero + n * STEP;
        if (n > 0 && n % 8 === 0) {
          return (
            <g key={n}>
              <path d={`M4 ${y + 0.5}h2M19 ${y + 0.5}h2`} stroke="#8f8f8f" />
              <text transform={`translate(17 ${y}) rotate(-90)`} textAnchor="middle" fontSize="12" fontFamily="Noto Sans" fill="#8f8f8f">{n / 8}</text>
            </g>
          );
        }
        return <path key={n} d={n % 4 === 0 ? `M8 ${y + 0.5}h8` : `M9 ${y + 0.5}h5`} stroke="#9a9a9a" />;
      })}
    </svg>
  );
}

/* ---------- document ---------- */

const labels = [
  { t: "A", x: 46, y: 59 },
  { t: "M", x: 317, y: 59 },
  { t: "B", x: 459, y: 59 },
  { t: "78гр", x: 251, y: 98 },
  { t: "C", x: 43, y: 163 },
  { t: "N", x: 218, y: 163 },
  { t: "D", x: 441, y: 163 },
];

function Page() {
  return (
    <article className="relative ml-[108px] w-[797px] flex-none border border-b-0 border-[#bdbcba] bg-white px-[77px] pt-[77px] font-['Liberation_Serif',serif] text-[16px] leading-[18px] text-black shadow-[0_0_5px_rgba(0,0,0,0.25)]">
      <span className="absolute top-16 left-[63px] h-[14px] w-[14px] border-r border-b border-[#b9b9b9]" />
      <span className="absolute top-16 right-[63px] h-[14px] w-[14px] border-b border-l border-[#b9b9b9]" />
      <svg className="overflow-visible" width="460" height="350" viewBox="0 0 460 350" fill="none" role="img" aria-label="Прямые AB и CD и секущая MN">
        <path d="M52.500 71.500l399 3M54.500 169.500h400.500M99.500 308.500L396.500-11.500" stroke="#3f669c" />
        {labels.map((l) => (
          <text key={l.t} x={l.x} y={l.y} fontSize="16" fill="#000">{l.t}</text>
        ))}
      </svg>
      <p className="flex whitespace-pre">
        AB || CD  если угол CNM равен 102 градусам
        <span className="-ml-px h-[17px] w-0.5 bg-black" />
      </p>
    </article>
  );
}

function Scrollbar() {
  return (
    <aside className="flex w-[13px] flex-none flex-col" aria-label="Прокрутка">
      <div className="flex flex-1 flex-col rounded-full border border-[#b3b1ae] bg-[#f6f5f4]">
        <button type="button" aria-label="Вверх" className="flex h-3 flex-none items-center justify-center">
          <svg width="5" height="3" viewBox="0 0 5 3"><path d="M0 3h5L2.500 0z" fill="#8c8c8c" /></svg>
        </button>
        <div className="flex h-[651px] flex-none flex-col items-center justify-center gap-0.5 rounded-full border border-[#a3a19e] bg-linear-to-r from-white to-[#d8d7d5]">
          <span className="h-px w-1 bg-[#a3a19e]" />
          <span className="h-px w-1 bg-[#a3a19e]" />
          <span className="h-px w-1 bg-[#a3a19e]" />
        </div>
        <div className="flex-1 bg-[#dddcda]" />
        <button type="button" aria-label="Вниз" className="flex h-3 flex-none items-center justify-center">
          <svg width="5" height="3" viewBox="0 0 5 3"><path d="M0 0h5L2.500 3z" fill="#6c6c6c" /></svg>
        </button>
      </div>
      <div className="flex flex-none flex-col items-center gap-0.5 pt-0.5">
        <button type="button" aria-label="Предыдущая страница" className="flex h-[11px] w-[11px] items-center justify-center rounded border border-[#b3b1ae] bg-white">
          <svg width="5" height="5" viewBox="0 0 5 5"><path d="M2.500 0L5 2H3v1h2v1H0V3h2V2H0z" fill="#333" /></svg>
        </button>
        <button type="button" aria-label="Навигация" className="flex h-[11px] w-[11px] items-center justify-center rounded border border-[#b3b1ae] bg-white">
          <svg width="6" height="6" viewBox="0 0 6 6"><path d="M0 6V3l3-3h3v3L3 6z" fill="#3a5a78" /></svg>
        </button>
        <button type="button" aria-label="Следующая страница" className="flex h-[11px] w-[11px] items-center justify-center rounded border border-[#b3b1ae] bg-white">
          <svg width="5" height="5" viewBox="0 0 5 5"><path d="M2.500 5L0 3h2V2H0V1h5v1H3v1h2z" fill="#333" /></svg>
        </button>
      </div>
    </aside>
  );
}

function StatusBar() {
  return (
    <footer className="flex h-6 flex-none items-stretch border-t-2 border-t-[#b3b1ae] py-[3px] text-[12px] leading-[18px] text-[#4c4c4c]">
      <span className="w-[290px] border-r border-[#cfcdca] pl-2.5">Страница 1 / 1</span>
      <span className="w-[318px] border-r border-[#cfcdca] pl-2">9 слов, 42 символов</span>
      <span className="w-[257px] border-r border-[#cfcdca] pl-2">Базовый</span>
      <span className="w-[251px] border-r border-[#cfcdca] text-center">Русский</span>
      <span className="w-[68px] border-r border-[#cfcdca]" />
      <span className="flex w-[29px] items-center justify-center border-r border-[#cfcdca]">
        <svg width="13" height="11" viewBox="0 0 13 11" fill="none" aria-hidden="true">
          <path d="M0 3h9v6H0z" fill="#8a8a88" />
          <path d="M9 .5h3M9 10.500h3M10.500 1v9" stroke="#8a8a88" />
        </svg>
      </span>
      <span className="flex w-[29px] items-center justify-center border-r border-[#cfcdca]">
        <svg width="14" height="14" viewBox="0 0 14 14" fill="none" aria-hidden="true">
          <path d="M.5.5h9l4 4v9H.5z" fill="#fff" stroke="#9391bd" />
          <path d="M9.500.5v4h4M2 3.500h5M2 6.500h10M2 9.500h10M2 11.500h7" stroke="#9391bd" />
        </svg>
      </span>
      <span className="w-[29px] border-r border-[#cfcdca]" />
      <span className="flex-1 border-r border-[#cfcdca]" />
      <span className="flex w-[76px] items-center justify-center gap-1.5 border-r border-[#cfcdca]">
        <button type="button" aria-label="Одна страница">
          <svg width="9" height="11" viewBox="0 0 9 11" fill="none"><path d="M.5.5h5l3 3v7h-8zM5.500.5v3h3" stroke="#8a8a88" /></svg>
        </button>
        <button type="button" aria-label="Несколько страниц">
          <svg width="18" height="11" viewBox="0 0 18 11" fill="none"><path d="M.5.5h4l3 3v7h-7zM4.500.5v3h3M10.500.5h4l3 3v7h-7zM14.500.5v3h3" stroke="#5a5a58" /></svg>
        </button>
        <button type="button" aria-label="Режим книги">
          <svg width="17" height="11" viewBox="0 0 17 11" fill="none"><path d="M3.500.5h5v10h-8v-7zM3.500.5v3h-3M8.500.5h5l3 3v7h-8M13.500.5v3h3" stroke="#8a8a88" /></svg>
        </button>
      </span>
      <span className="flex w-[143px] items-center justify-between border-r border-[#cfcdca] pr-[7px] pl-[9px]">
        <button type="button" aria-label="Уменьшить масштаб">
          <svg width="8" height="8" viewBox="0 0 8 8"><path d="M0 3h8v2H0z" fill="#8a8a88" /></svg>
        </button>
        <span className="relative flex w-[97px] items-center">
          <span className="absolute left-8 h-2.5 w-px bg-[#a5a3a0]" />
          <input
            type="range"
            aria-label="Масштаб"
            defaultValue={50}
            className="relative h-2.5 w-full appearance-none bg-transparent [&::-webkit-slider-runnable-track]:h-0.5 [&::-webkit-slider-runnable-track]:bg-[#a5a3a0] [&::-webkit-slider-thumb]:-mt-[3px] [&::-webkit-slider-thumb]:h-2 [&::-webkit-slider-thumb]:w-2 [&::-webkit-slider-thumb]:appearance-none [&::-webkit-slider-thumb]:rounded-full [&::-webkit-slider-thumb]:border [&::-webkit-slider-thumb]:border-[#777] [&::-webkit-slider-thumb]:bg-white"
          />
        </span>
        <button type="button" aria-label="Увеличить масштаб">
          <svg width="8" height="8" viewBox="0 0 8 8"><path d="M0 3h3V0h2v3h3v2H5v3H3V5H0z" fill="#777" /></svg>
        </button>
      </span>
      <span className="w-12 pl-[7px]">100%</span>
    </footer>
  );
}

function TopBar() {
  return (
    <header className="flex h-6 flex-none items-center bg-linear-to-b from-[#5a584f] to-[#3e3d38] pr-1 pl-1.5 text-[#dfdbd2]">
      <h1 className="font-['Open_Sans',sans-serif] text-[15px] leading-6 font-semibold">Без имени 1.odt - LibreOffice Writer</h1>
      <div className="ml-auto flex items-center text-[14px]">
        <svg width="18" height="18" viewBox="0 0 18 18" aria-hidden="true">
          <path d="M5 1L0 6h3v7h4V6h3zM13 17l5-5h-3V5h-4v7H8z" fill="#dfdbd2" />
        </svg>
        <span className="ml-[13px] flex h-5 w-5 items-center justify-center rounded-xs bg-[#dfdbd2] text-[12px] font-bold text-[#4a4942]">Ru</span>
        <svg className="ml-3" width="20" height="16" viewBox="0 0 20 16" fill="none" aria-hidden="true">
          <path d="M1 5h3l4-4v14l-4-4H1z" fill="#dfdbd2" />
          <path d="M10.500 5q2 3 0 6M13 3.500q3.500 4.500 0 9" stroke="#dfdbd2" strokeWidth="1.500" />
          <path d="M16 1.500q5 6.500 0 13" stroke="#8a877e" strokeWidth="1.500" />
        </svg>
        <time className="ml-3">19:57</time>
        <svg className="ml-3" width="18" height="18" viewBox="0 0 18 18" fill="none" stroke="#dfdbd2" aria-hidden="true">
          <path d="M6.500 4A5.500 5.500 0 1 0 11.500 4" strokeWidth="2" />
          <path d="M9 1v7" strokeWidth="2" />
          <path d="M1 9h3M14 9h3M3 3l2 2M15 3l-2 2M3 15l2-2M15 15l-2-2M9 14v3" strokeWidth="2" />
        </svg>
        <span className="ml-1.5">sun</span>
      </div>
    </header>
  );
}

export default function App() {
  return (
    <div className="flex h-screen flex-col overflow-hidden bg-[#f2f1f0] font-['Noto_Sans',sans-serif]">
      <Defs />
      <TopBar />
      <div className="flex min-h-0 flex-1">
        <Launcher />
        <main className="flex min-w-0 flex-1 flex-col">
          <div role="toolbar" aria-label="Стандартная" className="flex h-[39px] flex-none items-center border-b border-[#d4d3d1]">
            <Grip />
            <Items items={standardBar} />
          </div>
          <div role="toolbar" aria-label="Форматирование" className="flex h-[39px] flex-none items-center border-t border-b border-t-white border-b-[#d4d3d1] pb-0.5">
            <Grip />
            <Items items={[{ label: "Стили", icon: stylesIcon }, "sep"]} />
            <Combo label="Стиль" value="Базовый" className="w-[133px]" />
            <span className="mx-[3px] h-5 w-0.5 flex-none border-l border-[#d4d3d1] bg-white" />
            <Combo label="Шрифт" value="Liberation Serif" className="w-[160px]" />
            <span className="mx-[3px] h-5 w-0.5 flex-none border-l border-[#d4d3d1] bg-white" />
            <Combo label="Размер" value="12" className="w-[66px]" />
            <Items items={formatBar} />
          </div>
          <div className="flex min-h-0 flex-1">
            <div className="flex min-w-0 flex-1 flex-col overflow-hidden">
              <div className="flex h-[43px] flex-none">
                <span className="w-[130px] flex-none pt-2.5 pl-[9px]">
                  <svg width="8" height="7" viewBox="0 0 8 7" aria-hidden="true"><path d="M0 0h2v4h5v2H0z" fill="#8a8a88" /></svg>
                </span>
                <HorizontalRuler />
              </div>
              <div className="flex min-h-0 flex-1">
                <VerticalRuler />
                <Page />
              </div>
            </div>
            <Scrollbar />
          </div>
          <div role="toolbar" aria-label="Рисование" className="flex h-[39px] flex-none items-center border-t border-white">
            <Grip />
            <Items items={drawingBar} />
          </div>
          <StatusBar />
        </main>
      </div>
    </div>
  );
}
